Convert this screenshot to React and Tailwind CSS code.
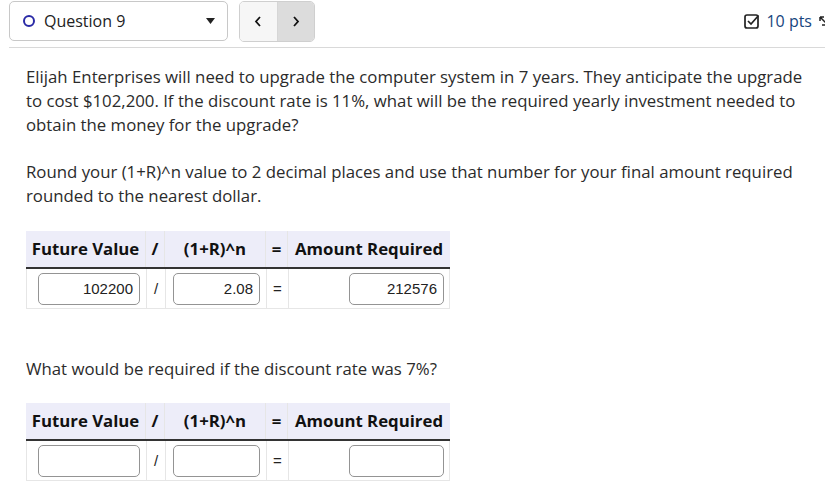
import React from 'react';

const body = { fontFamily: '"Open Sans", "Noto Sans", sans-serif' };
const arial = { fontFamily: '"Liberation Sans", Arial, sans-serif' };

function Field({ value, width }) {
  return (
    <div
      className="h-[32px] rounded-[5px] border border-[#949494] bg-white flex items-center justify-end pr-[6px] text-[15px] text-[#222]"
      style={{ ...arial, width }}
    >
      {value}
    </div>
  );
}

function CalcTable({ values }) {
  const cell = 'border-r border-[#e6e6e6]';
  return (
    <div className="w-[424px]">
      <div className="grid grid-cols-[120px_19px_101px_22px_162px] h-[36px] bg-[#ededf9] border-b-2 border-[#333] box-content text-[16.8px] font-bold text-[#111]">
        <div className={`${cell} flex items-center justify-center`}>Future Value</div>
        <div className={`${cell} flex items-center justify-center`}>/</div>
        <div className={`${cell} flex items-center justify-center`}>(1+R)^n</div>
        <div className={`${cell} flex items-center justify-center`}>=</div>
        <div className="flex items-center justify-center">Amount Required</div>
      </div>
      <div className="grid grid-cols-[120px_19px_101px_22px_162px] h-[40px] border-l border-r border-b border-[#e6e6e6] text-[15px] text-[#222]">
        <div className={`${cell} flex items-center justify-end pr-[6px]`}>
          <Field value={values[0]} width={102} />
        </div>
        <div className={`${cell} flex items-center justify-center`} style={arial}>/</div>
        <div className={`${cell} flex items-center justify-end pr-[6px]`}>
          <Field value={values[1]} width={87} />
        </div>
        <div className={`${cell} flex items-center justify-center`} style={arial}>=</div>
        <div className="flex items-center justify-end pr-[7px]">
          <Field value={values[2]} width={95} />
        </div>
      </div>
    </div>
  );
}

export default function App() {
  return (
    <div className="w-[825px] h-[490px] bg-white overflow-hidden text-[#2d2d2d]" style={body}>
      {/* question header */}
      <div className="ml-[9px] h-[48px] border-b border-[#d9d9d9] flex items-start pt-[1px]">
        <div className="w-[219px] h-[40px] rounded-[5px] border border-[#c8c8c8] flex items-center pl-[13px] pr-[12px]">
          <span className="w-[12px] h-[12px] rounded-full border-2 border-[#2a2aa6]" />
          <span className="ml-[9px] text-[16px] text-[#222]">Question 9</span>
          <svg className="ml-auto" width="9" height="6" viewBox="0 0 9 6">
            <path d="M0 0 L9 0 L4.5 6 Z" fill="#222" />
          </svg>
        </div>
        <div className="ml-[11px] w-[76px] h-[41px] rounded-[5px] border border-[#cfcfcf] flex overflow-hidden">
          <div className="flex-1 bg-[#f6f6f6] flex items-center justify-center border-r border-[#d6d6d6]">
            <svg width="8" height="11" viewBox="0 0 8 11">
              <path d="M6 1 L2 5.5 L6 10" fill="none" stroke="#111" strokeWidth="1.8" />
            </svg>
          </div>
          <div className="flex-1 bg-[#dcdcdc] flex items-center justify-center">
            <svg width="8" height="11" viewBox="0 0 8 11">
              <path d="M2 1 L6 5.5 L2 10" fill="none" stroke="#111" strokeWidth="1.8" />
            </svg>
          </div>
        </div>
        <div className="ml-auto h-[40px] flex items-center">
          <svg width="16" height="16" viewBox="0 0 16 16">
            <rect x="1" y="2" width="13" height="13" rx="2" fill="none" stroke="#222" strokeWidth="1.7" />
            <path d="M4 8 L7 11 L14.5 2.5" fill="none" stroke="#222" strokeWidth="1.7" />
          </svg>
          <span className="ml-[6px] text-[16px] text-[#17467e]">10 pts</span>
          <svg className="ml-[7px] -mr-[4px]" width="10" height="14" viewBox="0 0 10 14">
            <path d="M1 3 L7 9 M1 3 L1 7 M1 3 L5 3 M3 11 L9 11" fill="none" stroke="#222" strokeWidth="1.5" />
          </svg>
        </div>
      </div>

      {/* question body */}
      <div className="pl-[26px] pt-[17px] text-[16.8px] leading-[24px] text-[#2b2b2b]">
        <p className="mb-[23px] whitespace-nowrap">
          Elijah Enterprises will need to upgrade the computer system in 7 years. They anticipate the upgrade
          <br />
          to cost $102,200. If the discount rate is 11%, what will be the required yearly investment needed to
          <br />
          obtain the money for the upgrade?
        </p>
        <p className="mb-[23px] whitespace-nowrap">
          Round your (1+R)^n value to 2 decimal places and use that number for your final amount required
          <br />
          rounded to the nearest dollar.
        </p>
        <CalcTable values={['102200', '2.08', '212576']} />
        <p className="mt-[48px] mb-[22px]">What would be required if the discount rate was 7%?</p>
        <CalcTable values={['', '', '']} />
      </div>
    </div>
  );
}
